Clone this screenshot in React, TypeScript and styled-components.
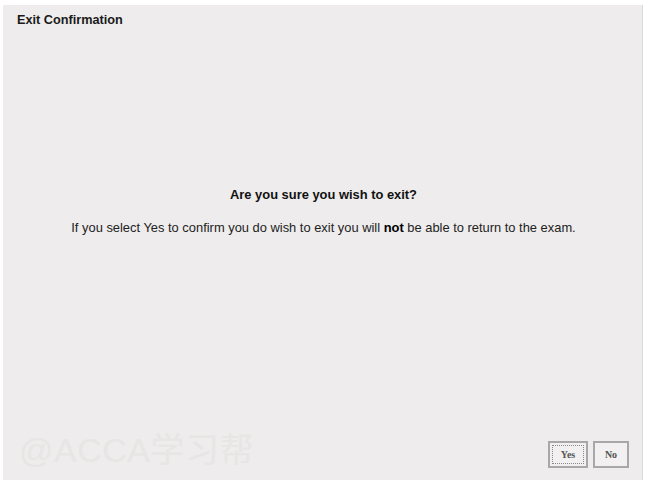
import styled, { createGlobalStyle } from "styled-components";

const GlobalStyle = createGlobalStyle`
  html, body {
    margin: 0;
    padding: 0;
    background: #ffffff;
  }
  body {
    font-family: "Liberation Sans", Arial, sans-serif;
  }
`;

const App = () => {
  return (
    <>
      <GlobalStyle />
      <Page>
        <Panel>
          <Title>Exit Confirmation</Title>
          <Body>
            <Question>Are you sure you wish to exit?</Question>
            <Message>
              If you select Yes to confirm you do wish to exit you will <strong>not</strong> be able to
              return to the exam.
            </Message>
          </Body>
          <Footer>
            <Watermark>@ACCA学习帮</Watermark>
            <Buttons>
              <Button $focused>Yes</Button>
              <Button>No</Button>
            </Buttons>
          </Footer>
        </Panel>
      </Page>
    </>
  );
};

const Page = styled.div`
  width: 648px;
  height: 487px;
  padding: 5px 5px 7px 3px;
  box-sizing: border-box;
  display: flex;
`;

const Panel = styled.div`
  flex: 1;
  display: flex;
  flex-direction: column;
  background: #eeecec;
  border-right: 1px solid #dcdada;
`;

const Title = styled.h1`
  margin: 0;
  padding: 8px 0 0 14px;
  font-size: 12.7px;
  font-weight: bold;
  color: #1a1a1a;
  line-height: 14px;
`;

const Body = styled.div`
  flex: 1;
  display: flex;
  flex-direction: column;
  align-items: center;
  padding-top: 160px;
  padding-left: 2px;
`;

const Question = styled.p`
  margin: 0;
  font-size: 12.9px;
  font-weight: bold;
  color: #111;
  line-height: 15px;
`;

const Message = styled.p`
  margin: 18px 0 0;
  font-size: 12.9px;
  color: #222;
  line-height: 15px;

  strong {
    color: #000;
  }
`;

const Footer = styled.div`
  display: flex;
  align-items: center;
  justify-content: space-between;
  padding: 0 13px 8px 16px;
`;

const Watermark = styled.span`
  font-family: "Liberation Sans", "Noto Sans CJK SC", sans-serif;
  font-size: 34px;
  color: #e8e5e5;
  letter-spacing: 0.5px;
  margin-top: -14px;
`;

const Buttons = styled.div`
  display: flex;
  gap: 5px;
`;

const Button = styled.button<{ $focused?: boolean }>`
  width: ${({ $focused }) => ($focused ? "40px" : "36px")};
  height: 27px;
  padding: 0;
  background: #f2f0f0;
  border: 2px solid #a9a7a7;
  font-family: "Liberation Serif", "Times New Roman", serif;
  font-size: 10px;
  font-weight: bold;
  color: #555;
  outline: ${({ $focused }) => ($focused ? "1px dotted #888" : "none")};
  outline-offset: -5px;
`;

export default App;
